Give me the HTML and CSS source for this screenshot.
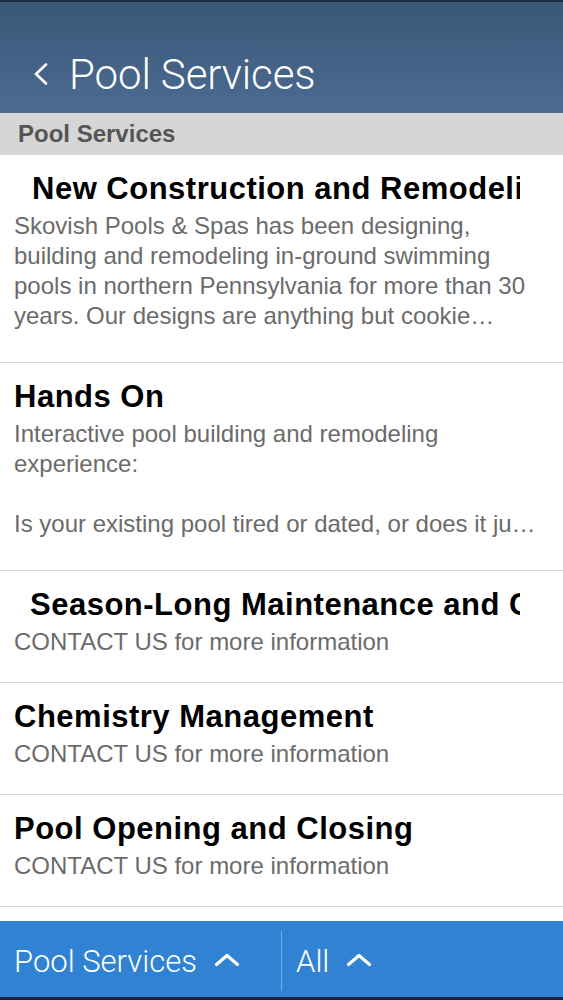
FILE: index.html
```html
<!DOCTYPE html>
<html lang="en">
<head>
    <meta charset="UTF-8">
    <meta name="viewport" content="width=device-width, initial-scale=1.0">
    <title>Pool Services</title>
    <link rel="stylesheet" href="styles.css">
</head>
<body>

    <div class="app">
        <header class="topbar">
            <svg class="back" width="16" height="22" viewBox="0 0 16 22">
                <path d="M13 1.5 L3 11 L13 20.5" fill="none" stroke="#fff" stroke-width="2.6" stroke-linecap="round" stroke-linejoin="round"/>
            </svg>
            <h1>Pool Services</h1>
        </header>

        <div class="section-title">Pool Services</div>

        <ul class="list">
            <li class="item item-long">
                <div class="item-title indent-wide">New Construction and Remodeling</div>
                <p class="item-desc clamp">Skovish Pools &amp; Spas has been designing, building and remodeling in-ground swimming pools in northern Pennsylvania for more than 30 years. Our designs are anything but cookie cutter, and every pool we build is made to fit your home.</p>
            </li>
            <li class="item item-long">
                <div class="item-title">Hands On</div>
                <p class="item-desc clamp">Interactive pool building and remodeling experience:<br><br>Is your existing pool tired or dated, or does it just need a fresh new look for the coming season?</p>
            </li>
            <li class="item">
                <div class="item-title indent">Season-Long Maintenance and Care</div>
                <p class="item-desc">CONTACT US for more information</p>
            </li>
            <li class="item">
                <div class="item-title">Chemistry Management</div>
                <p class="item-desc">CONTACT US for more information</p>
            </li>
            <li class="item">
                <div class="item-title">Pool Opening and Closing</div>
                <p class="item-desc">CONTACT US for more information</p>
            </li>
        </ul>

        <footer class="tabbar">
            <div class="tab">
                Pool Services
                <svg class="caret" width="26" height="14" viewBox="0 0 26 14">
                    <path d="M2.5 11.5 L13 2.5 L23.5 11.5" fill="none" stroke="#fff" stroke-width="3.2" stroke-linecap="round" stroke-linejoin="round"/>
                </svg>
            </div>
            <div class="tab tab-right">
                All
                <svg class="caret" width="26" height="14" viewBox="0 0 26 14">
                    <path d="M2.5 11.5 L13 2.5 L23.5 11.5" fill="none" stroke="#fff" stroke-width="3.2" stroke-linecap="round" stroke-linejoin="round"/>
                </svg>
            </div>
        </footer>
    </div>

</body>
</html>
```

FILE: styles.css
```css
body {
    margin: 0;
    font-family: "Liberation Sans", Arial, sans-serif;
    background-color: #fff;
}
.app {
    display: flex;
    flex-direction: column;
    height: 100vh;
    overflow: hidden;
}

/* top bar */
.topbar {
    height: 113px;
    border-top: 2px solid #1c2c42;
    background: linear-gradient(to bottom, #3a5777, #4b6b91);
    display: flex;
    align-items: center;
    padding: 34px 0 0 33px;
    box-sizing: border-box;
    flex-shrink: 0;
}
.back {
    margin-top: -2px;
}
.topbar h1 {
    margin: 0 0 0 20px;
    font-family: Roboto, "Liberation Sans", sans-serif;
    font-weight: 300;
    font-size: 42px;
    line-height: 50px;
    color: #fff;
    letter-spacing: -0.1px;
}

.section-title {
    height: 42px;
    line-height: 42px;
    background-color: #d6d6d6;
    color: #555;
    font-size: 24px;
    font-weight: bold;
    padding-left: 18px;
    flex-shrink: 0;
}

/* list */
.list {
    list-style: none;
    margin: 0;
    padding: 0;
    flex: 1;
}
.item {
    padding: 16px 14px 25px;
    border-bottom: 1px solid #d8d8d8;
}
.item-long {
    padding-bottom: 31px;
}
.item-title {
    width: 506px;
    overflow: hidden;
    white-space: nowrap;
    font-size: 31px;
    font-weight: bold;
    letter-spacing: 0.5px;
    line-height: 36px;
    color: #000;
    box-sizing: border-box;
}
.indent-wide {
    padding-left: 18px;
}
.indent {
    padding-left: 16px;
}
.item-desc {
    margin: 4px 0 0;
    width: 527px;
    font-size: 24px;
    line-height: 30px;
    color: #6b6b6b;
}
.clamp {
    display: -webkit-box;
    -webkit-line-clamp: 4;
    -webkit-box-orient: vertical;
    overflow: hidden;
}

/* bottom bar */
.tabbar {
    height: 79px;
    padding-top: 4px;
    background-color: #3182d2;
    border-bottom: 3px solid #17263a;
    box-sizing: border-box;
    display: flex;
    align-items: center;
    flex-shrink: 0;
}
.tab {
    display: flex;
    align-items: center;
    gap: 17px;
    height: 60px;
    font-family: Roboto, "Liberation Sans", sans-serif;
    font-weight: 300;
    font-size: 31px;
    color: #fff;
    padding-left: 14px;
    width: 267px;
}
.tab-right {
    border-left: 1px solid rgba(255, 255, 255, 0.35);
    width: auto;
}
.caret {
    margin-top: -2px;
}
```
